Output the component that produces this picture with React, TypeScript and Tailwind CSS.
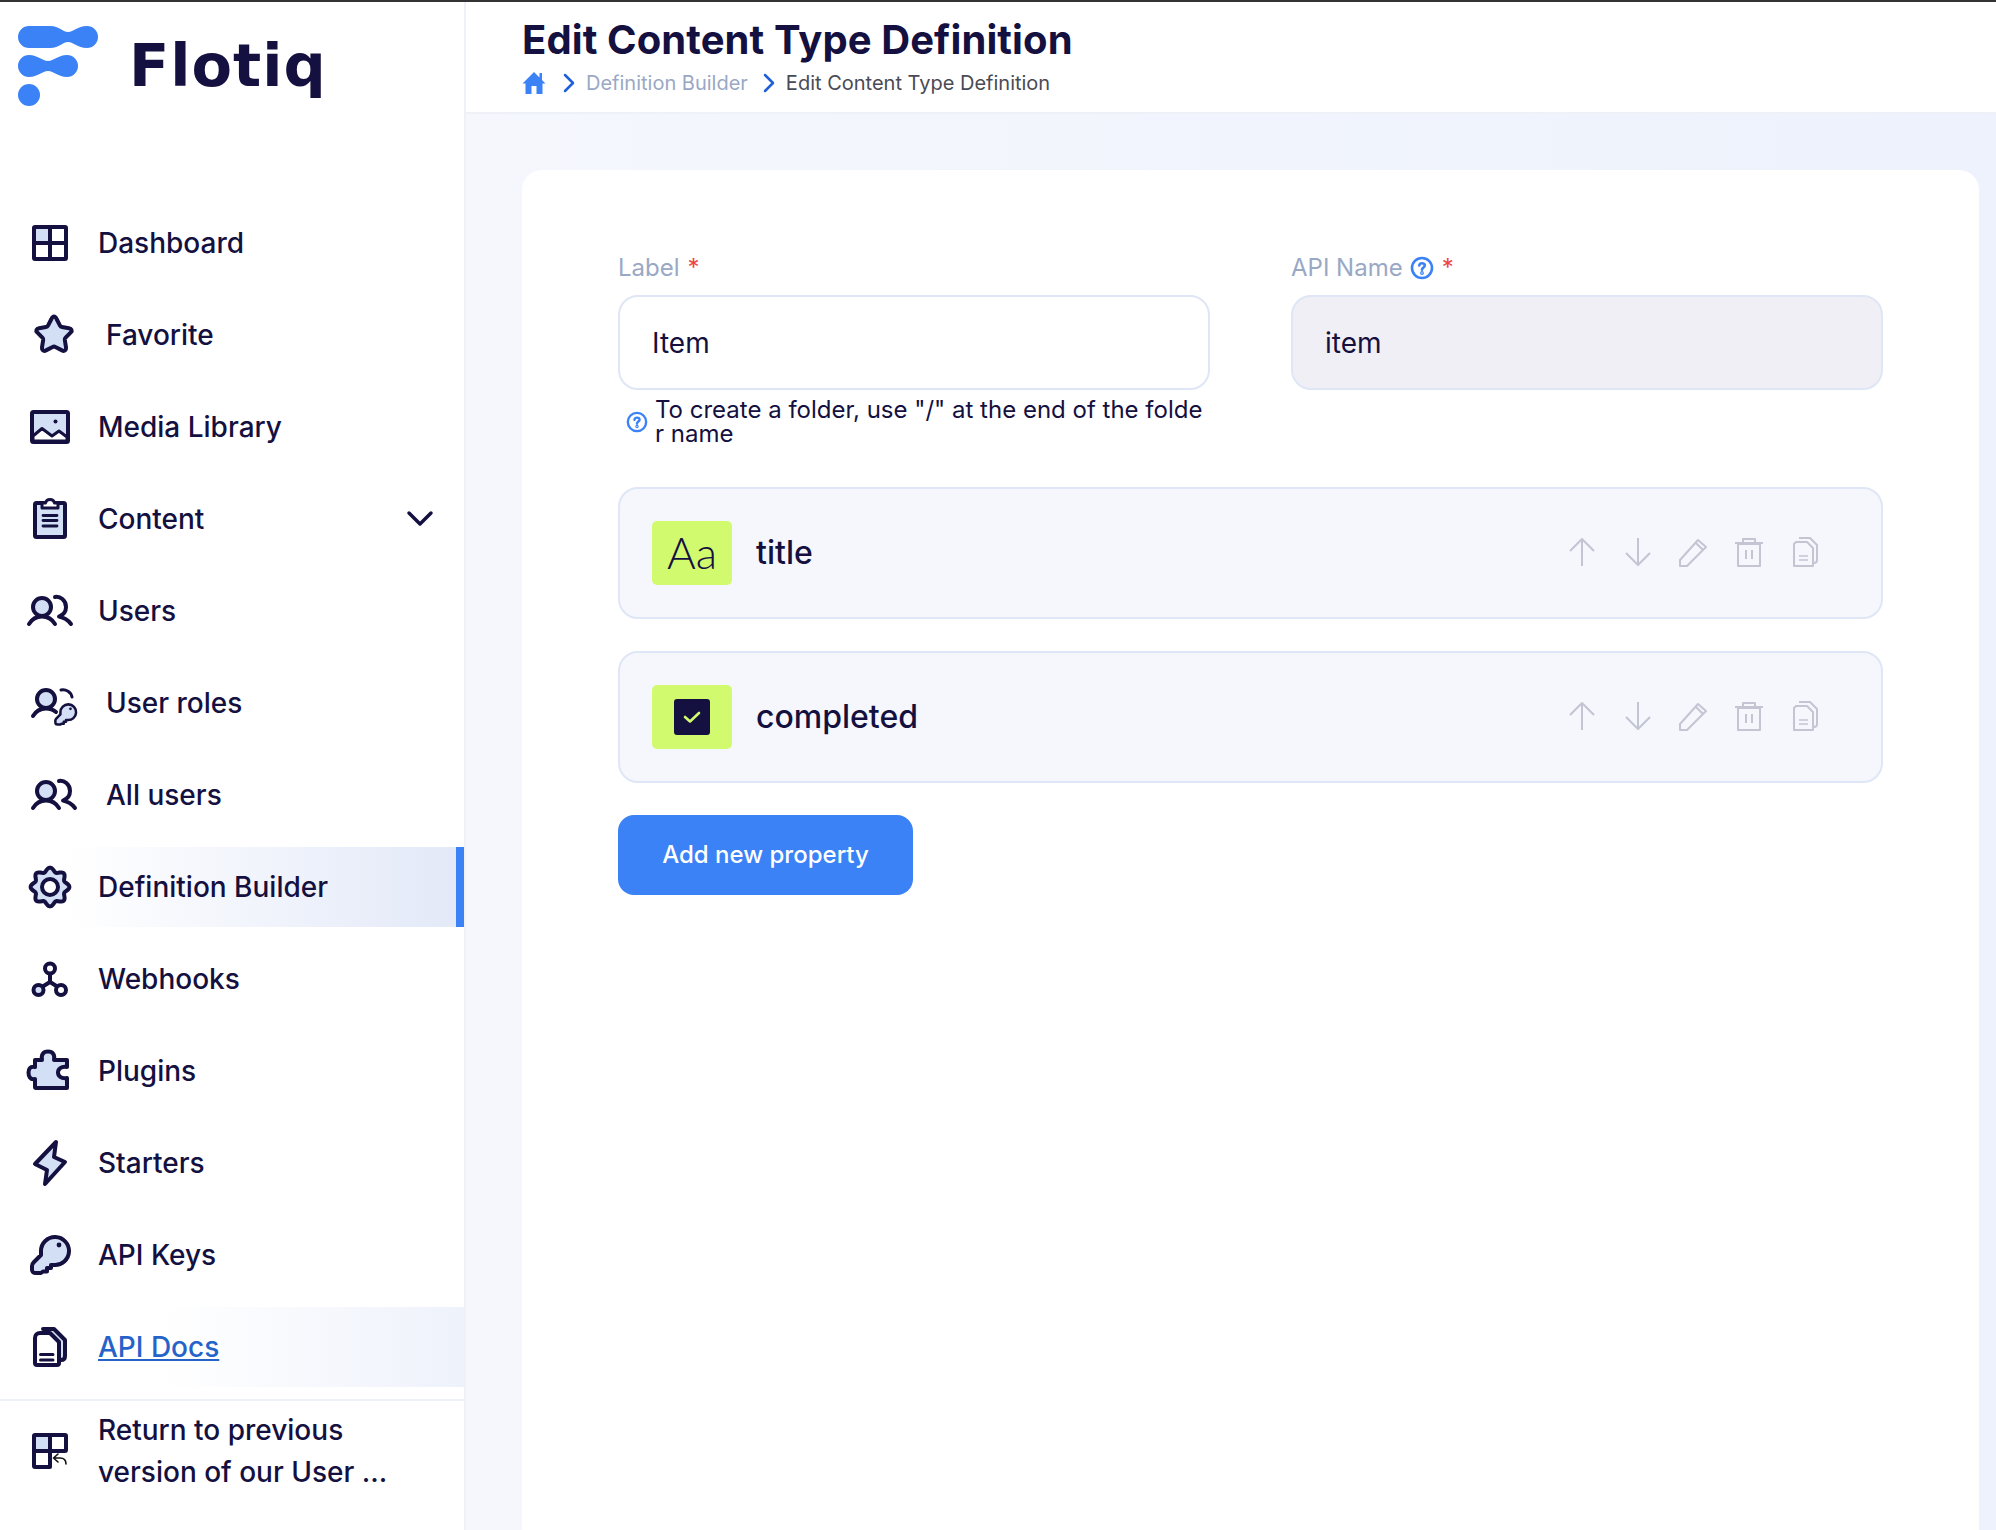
import React from 'react';

const NAVY = '#14103f';
const LIGHT = '#d3dff5';

function Svg({ children, size = 48 }: { children: React.ReactNode; size?: number }) {
  return (
    <svg width={size} height={size} viewBox="0 0 48 48" fill="none" stroke={NAVY} strokeWidth={4} strokeLinecap="round" strokeLinejoin="round" className="shrink-0">
      {children}
    </svg>
  );
}

const gearPath = (() => {
  const pts: string[] = [];
  for (let i = 0; i < 96; i++) {
    const t = (i / 96) * Math.PI * 2;
    const r = 17.4 + 2 * Math.cos(8 * t);
    pts.push(`${(24 + r * Math.cos(t)).toFixed(2)} ${(24 + r * Math.sin(t)).toFixed(2)}`);
  }
  return 'M' + pts.join('L') + 'Z';
})();

const DashboardIcon = () => (
  <Svg>
    <rect x="8" y="8" width="16" height="16" fill={LIGHT} stroke="none" />
    <rect x="8" y="8" width="32" height="32" rx="1" />
    <path d="M24 8V40M8 24H40" />
  </Svg>
);
const StarIcon = () => (
  <Svg>
    <path d="M24 5.5C25 5.5 25.8 6.3 26.6 8L30 14.6C30.4 15.4 31 15.9 32 16L39 17.2C41.5 17.6 42.6 19.6 40.8 21.4L35.6 26.6C35 27.2 34.7 28 34.8 28.8L36 36.4C36.4 39.4 34.4 40.6 32 39.4L25.4 36C24.5 35.5 23.5 35.5 22.6 36L16 39.4C13.6 40.6 11.6 39.4 12 36.4L13.2 28.8C13.3 28 13 27.2 12.4 26.6L7.2 21.4C5.4 19.6 6.5 17.6 9 17.2L16 16C17 15.9 17.6 15.4 18 14.6L21.4 8C22.2 6.3 23 5.5 24 5.5Z" fill={LIGHT} />
  </Svg>
);
const MediaIcon = () => (
  <Svg>
    <rect x="6" y="9" width="36" height="30" rx="1.5" fill={LIGHT} />
    <path d="M7 33L16 25.5L26 33L33 28L41 34V38H7Z" fill="#fff" strokeWidth="3" />
    <circle cx="29.5" cy="18.5" r="2" fill={NAVY} stroke="none" />
  </Svg>
);
const ContentIcon = () => (
  <Svg>
    <rect x="9" y="8" width="30" height="34" rx="1.5" fill={LIGHT} />
    <path d="M16 13V8H19.5C20 5.5 22 4.5 24 4.5C26 4.5 28 5.5 28.5 8H32V13Z" fill="#fff" strokeWidth="3" />
    <path d="M17 20.5H31M17 25.5H31M17 31H31" strokeWidth="2.8" />
  </Svg>
);
const UsersIcon = () => (
  <Svg>
    <circle cx="16" cy="20" r="9" fill={LIGHT} />
    <path d="M3 37C6 32 10 29.5 16 29.5C22 29.5 26 32 29 37" />
    <path d="M29 10C34 9 40 13 40 20C40 25 37 28 33 29.5C38 30.5 42 33 45 37" />
  </Svg>
);
const KeyShape = () => (
  <>
    <path d="M15 20A14 14 0 1 1 28 34H25V37H21V40.5H17L15 42H10C7 42 6 41 6 38V35C6 33 7 32 8 31L15 24C15 22 15 21 15 20Z" fill={LIGHT} />
    <circle cx="33" cy="14" r="2.4" fill={NAVY} stroke="none" />
  </>
);
const UserRolesIcon = () => (
  <Svg>
    <circle cx="16" cy="20" r="9" fill={LIGHT} />
    <path d="M3 37C6 32 10 29.5 16 29.5C20 29.5 23 30.5 26 33" />
    <path d="M31 11C36 10 41 13 42 18" strokeWidth="3" />
    <g transform="translate(22 22) scale(0.56)" strokeWidth="4.5">
      <KeyShape />
    </g>
  </Svg>
);
const GearIcon = () => (
  <Svg>
    <path d={gearPath} fill={LIGHT} strokeWidth="4" />
    <circle cx="24" cy="24" r="8" fill="#fff" strokeWidth="4" />
  </Svg>
);
const WebhookIcon = () => (
  <Svg>
    <path d="M24 19V27M24 27L16 32M24 27L32 32" />
    <circle cx="24" cy="13.5" r="5" fill="#fff" />
    <circle cx="12.5" cy="35" r="5" fill={LIGHT} />
    <circle cx="35" cy="35" r="5" fill="#fff" />
  </Svg>
);
const PuzzleIcon = () => (
  <Svg>
    <path d="M9 13H16C15 8 17 4.5 22 4.5C27 4.5 29 8 28 13H41V20C35 19 32 22 32 25.5C32 29 35 32 41 31V41H10C9.5 41 9 40.5 9 40V32C4 33 2.5 29 2.5 25.5C2.5 22 4 19 9 20Z" fill={LIGHT} />
  </Svg>
);
const BoltIcon = () => (
  <Svg>
    <path d="M30 3L28 18L39 23L19 45L21 31L9 25Z" fill={LIGHT} />
  </Svg>
);
const KeyIcon = () => (
  <Svg>
    <KeyShape />
  </Svg>
);
const DocsIcon = () => (
  <Svg>
    <path d="M17 6H28L39 17V33C39 36 37 37 35 37" fill={LIGHT} />
    <path d="M14 10H24L33 19V40C33 41.5 32.5 42 31 42H11C9.5 42 9 41.5 9 40V15C9 12 11 10 14 10Z" fill="#fff" />
    <path d="M14.5 31.5H27M14.5 37H27" strokeWidth="3" />
  </Svg>
);
const ReturnIcon = () => (
  <Svg>
    <rect x="8" y="8" width="16" height="16" fill={LIGHT} stroke="none" />
    <path d="M24 40H9C8.4 40 8 39.6 8 39V9C8 8.4 8.4 8 9 8H39C39.6 8 40 8.4 40 9V23C40 23.6 39.6 24 39 24H8M24 8V40" />
    <path d="M32 27L27.5 31L32 35M27.5 31H34C38 31 40 33 40 37" stroke="#111" strokeWidth="1.6" />
  </Svg>
);

function HelpIcon({ size = 24 }: { size?: number }) {
  return (
    <svg width={size} height={size} viewBox="0 0 24 24" fill="none" stroke="#3b82f6" strokeWidth={2.6} strokeLinecap="round" strokeLinejoin="round" className="shrink-0">
      <circle cx="12" cy="12" r="10" />
      <path d="M9.2 9.5C9.5 8 10.6 7.2 12 7.2C13.6 7.2 14.8 8.2 14.8 9.6C14.8 11.5 12 11.6 12 13.8" />
      <circle cx="12" cy="17" r="0.6" />
    </svg>
  );
}

function Action({ children }: { children: React.ReactNode }) {
  return (
    <svg width="32" height="32" viewBox="0 0 32 32" fill="none" stroke="#c3c5d3" strokeWidth={2} strokeLinejoin="round" className="shrink-0">
      {children}
    </svg>
  );
}

function RowActions() {
  return (
    <div className="mb-[2px] ml-auto mr-[59px] flex gap-[24px]">
      <Action><path d="M16 30V3M4 15L16 3L28 15" /></Action>
      <Action><path d="M16 2V29M4 17L16 29L28 17" /></Action>
      <Action><path d="M2 24L20 4L28 11L9 30H2Z" /><path d="M18 7L25 14" /></Action>
      <Action><path d="M4 30V8H26V30H4ZM1 7H29M9 7V3H21V7M12 14V23M18 14V23" /></Action>
      <Action><path d="M9 2H20L27 9V24C27 26 26 27 24 27" /><path d="M6 6H17L23 12V30H4V8Z" /><path d="M9 20H18M9 24H18" strokeWidth="1.5" /></Action>
    </div>
  );
}

type NavItem = { label: string; icon: React.ReactNode; indent?: boolean; chevron?: boolean; active?: boolean; link?: boolean };

const navItems: NavItem[] = [
  { label: 'Dashboard', icon: <DashboardIcon /> },
  { label: 'Favorite', icon: <StarIcon />, indent: true },
  { label: 'Media Library', icon: <MediaIcon /> },
  { label: 'Content', icon: <ContentIcon />, chevron: true },
  { label: 'Users', icon: <UsersIcon /> },
  { label: 'User roles', icon: <UserRolesIcon />, indent: true },
  { label: 'All users', icon: <UsersIcon />, indent: true },
  { label: 'Definition Builder', icon: <GearIcon />, active: true },
  { label: 'Webhooks', icon: <WebhookIcon /> },
  { label: 'Plugins', icon: <PuzzleIcon /> },
  { label: 'Starters', icon: <BoltIcon /> },
  { label: 'API Keys', icon: <KeyIcon /> },
  { label: 'API Docs', icon: <DocsIcon />, link: true },
];

function Sidebar() {
  return (
    <aside className="flex w-[466px] shrink-0 flex-col border-r-2 border-[#eff1f8] bg-white">
      {/* Logo */}
      <div className="flex h-[201px] items-start pl-[18px] pt-[24px]">
        <svg width="80" height="80" viewBox="18 26 80 80" fill="#3b82f6" className="shrink-0">
          <path d="M29 26H50C60 26 62 32 68 32C74 32 77 26 87 26A11 11 0 0 1 87 48C77 48 74 42 68 42C62 42 60 48 50 48H29A11 11 0 0 1 29 26Z" />
          <path d="M29 55C38 55 42 61 48 61C54 61 58 55 67 55A11 11 0 0 1 67 77C58 77 54 71 48 71C42 71 38 77 29 77A11 11 0 0 1 29 55Z" />
          <circle cx="29" cy="95" r="11" />
        </svg>
        <span className="ml-[31px] mt-[5px] font-['DejaVu_Sans',sans-serif] text-[59px] leading-[70px] font-bold tracking-[1px] text-[#14103f]">Flotiq</span>
      </div>

      {/* Nav */}
      <nav className="flex flex-col gap-[12px]">
        {navItems.map((item) => (
          <div
            key={item.label}
            className={`flex h-[80px] items-center ${item.indent ? 'gap-[28px] pl-[30px]' : 'gap-[24px] pl-[26px]'} ${
              item.active
                ? 'border-r-[8px] border-[#3b82f6] bg-gradient-to-r from-white from-[15%] to-[#e3e9f8]'
                : item.link
                  ? 'bg-gradient-to-r from-white from-[35%] to-[#eef2fb]'
                  : ''
            }`}
          >
            {item.icon}
            <span className={`text-[28px] leading-[42px] font-[450] ${item.link ? 'text-[#2563c9] underline' : 'text-[#14103f]'}`}>{item.label}</span>
            {item.chevron && (
              <svg width="28" height="18" viewBox="0 0 28 18" fill="none" stroke={NAVY} strokeWidth={3.5} strokeLinecap="round" strokeLinejoin="round" className="ml-auto mr-[30px]">
                <path d="M3 3L14 14L25 3" />
              </svg>
            )}
          </div>
        ))}
      </nav>

      {/* Return */}
      <div className="mt-[12px] flex gap-[24px] border-t-2 border-[#eff1f8] pl-[26px] pt-[8px]">
        <div className="flex items-center">
          <ReturnIcon />
        </div>
        <span className="w-[330px] text-[28px] leading-[42px] font-[450] text-[#14103f]">Return to previous version of our User ...</span>
      </div>
    </aside>
  );
}

function Chevron() {
  return (
    <svg width="12" height="20" viewBox="0 0 12 20" fill="none" stroke="#1f5fd9" strokeWidth={2.5} strokeLinecap="round" strokeLinejoin="round" className="shrink-0">
      <path d="M2 2L10 10L2 18" />
    </svg>
  );
}

function PropertyRow({ icon, name }: { icon: React.ReactNode; name: string }) {
  return (
    <div className="flex h-[132px] items-center rounded-[20px] border-2 border-[#dfe6f5] bg-[#f5f7fd] pl-[32px]">
      <div className="flex h-[64px] w-[80px] items-center justify-center rounded-[5px] bg-[#d2fa6e]">{icon}</div>
      <span className="ml-[24px] text-[32px] leading-[44px] font-[450] text-[#14103f]">{name}</span>
      <RowActions />
    </div>
  );
}

export default function App() {
  return (
    <div className="flex h-screen flex-col overflow-hidden bg-white font-['Inter',sans-serif]">
      <div className="h-[2px] shrink-0 bg-[#333333]" />
      <div className="flex min-h-0 flex-1">
        <Sidebar />
        <main className="flex min-w-0 flex-1 flex-col bg-gradient-to-r from-[#f5f7fd] to-[#edf2fc]">
          {/* Header */}
          <header className="h-[112px] shrink-0 border-b-2 border-[#eff1f8] bg-white pl-[56px]">
            <h1 className="pt-[13px] text-[40px] leading-[50px] font-bold tracking-[0.1px] text-[#14103f]">Edit Content Type Definition</h1>
            <div className="mt-[4px] flex items-center text-[20px] leading-[28px]">
              <svg width="24" height="24" viewBox="0 0 24 24" fill="#3b82f6" className="shrink-0">
                <path d="M12 1L0.5 12.5H3.5V23H9.5V15H14.5V23H20.5V12.5H23.5L20 9V2H17.5V6.5Z" />
              </svg>
              <span className="ml-[17px]"><Chevron /></span>
              <span className="ml-[11px] text-[#9aa8c4]">Definition Builder</span>
              <span className="ml-[15px]"><Chevron /></span>
              <span className="ml-[11px] text-[#4a4a55]">Edit Content Type Definition</span>
            </div>
          </header>

          {/* Card */}
          <div className="min-h-0 flex-1 pl-[56px] pr-[17px] pt-[56px]">
            <div className="h-full rounded-t-[20px] bg-white px-[96px] pt-[80px]">
              <div className="grid grid-cols-2 gap-[81px]">
                <div>
                  <div className="flex h-[36px] items-center text-[24px] text-[#9aa8c4]">
                    Label<span className="ml-[8px] text-[#ef4444]">*</span>
                  </div>
                  <div className="mt-[9px] flex h-[95px] items-center rounded-[20px] border-2 border-[#dfe6f5] bg-white pl-[32px] text-[28px] text-[#14103f]">Item</div>
                  <div className="mt-[8px] flex items-center gap-[7px] pl-[8px]">
                    <HelpIcon size={22} />
                    <p className="min-w-0 flex-1 break-all text-[24px] leading-[24px] text-[#14103f]">To create a folder, use "/" at the end of the folder name</p>
                  </div>
                </div>
                <div>
                  <div className="flex h-[36px] items-center text-[24px] text-[#9aa8c4]">
                    API Name<span className="ml-[7px]"><HelpIcon /></span><span className="ml-[8px] text-[#ef4444]">*</span>
                  </div>
                  <div className="mt-[9px] flex h-[95px] items-center rounded-[20px] border-2 border-[#dfe6f5] bg-[#efeff5] pl-[32px] text-[28px] text-[#14103f]">item</div>
                </div>
              </div>

              <div className="mt-[41px] flex flex-col gap-[32px]">
                <PropertyRow icon={<span className="-mt-[3px] font-['Lato',sans-serif] text-[44px] leading-none font-light text-[#14103f]">Aa</span>} name="title" />
                <PropertyRow
                  icon={
                    <div className="flex h-[36px] w-[36px] items-center justify-center rounded-[3px] bg-[#14103f]">
                      <svg width="22" height="22" viewBox="0 0 22 22" fill="none" stroke="#d2fa6e" strokeWidth={2.6} strokeLinecap="round" strokeLinejoin="round">
                        <path d="M4 11L9 15.5L18 7" />
                      </svg>
                    </div>
                  }
                  name="completed"
                />
              </div>

              <button className="mt-[32px] flex h-[80px] w-[295px] items-center justify-center rounded-[16px] bg-[#3b82f6] text-[24px] font-medium text-white">Add new property</button>
            </div>
          </div>
        </main>
      </div>
    </div>
  );
}
